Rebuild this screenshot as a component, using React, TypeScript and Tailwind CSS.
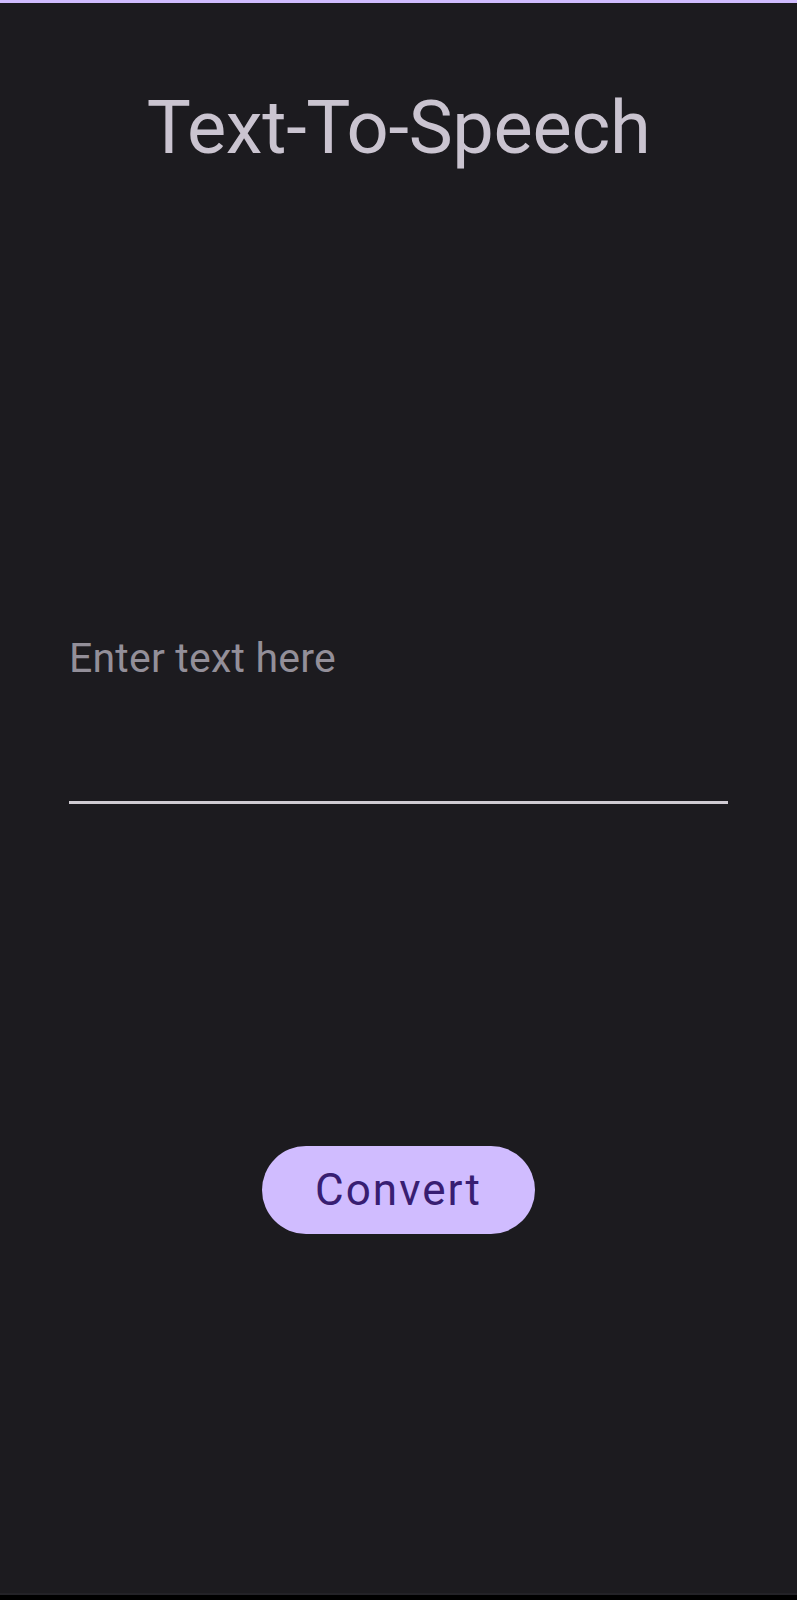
import { useState } from 'react';

export default function App() {
  const [text, setText] = useState('');

  return (
    <div
      className="flex h-[1600px] w-full flex-col bg-black"
      style={{ fontFamily: 'Roboto, "Noto Sans", sans-serif' }}
    >
      {/* status-bar accent */}
      <div className="h-[3px] w-full bg-[#d0bcff]" />

      <main className="flex flex-1 flex-col items-center bg-[#1c1b1f]">
        {/* Title */}
        <h1 className="mt-[88px] text-center text-[74px] font-normal leading-none tracking-[-0.3px] text-[#cac4d0]">
          Text-To-Speech
        </h1>

        {/* Input */}
        <div className="mt-[473px] w-full px-[69px]">
          <textarea
            value={text}
            onChange={(e) => setText(e.target.value)}
            placeholder="Enter text here"
            className="block h-[166px] w-full resize-none border-b-[3px] border-[#cfcbd2] bg-transparent p-0 text-[41px] leading-none tracking-[0.2px] text-[#e6e1e5] outline-none placeholder:text-[#938f99]"
          />
        </div>

        {/* Action */}
        <button className="mt-[342px] flex h-[88px] w-[273px] items-center justify-center rounded-full bg-[#d0bcff] text-[44px] font-normal leading-none tracking-[2px] text-[#381e72]">
          Convert
        </button>
      </main>

      {/* nav bar edge */}
      <div className="h-[2px] w-full bg-[#232227]" />
      <div className="h-[5px] w-full bg-black" />
    </div>
  );
}
